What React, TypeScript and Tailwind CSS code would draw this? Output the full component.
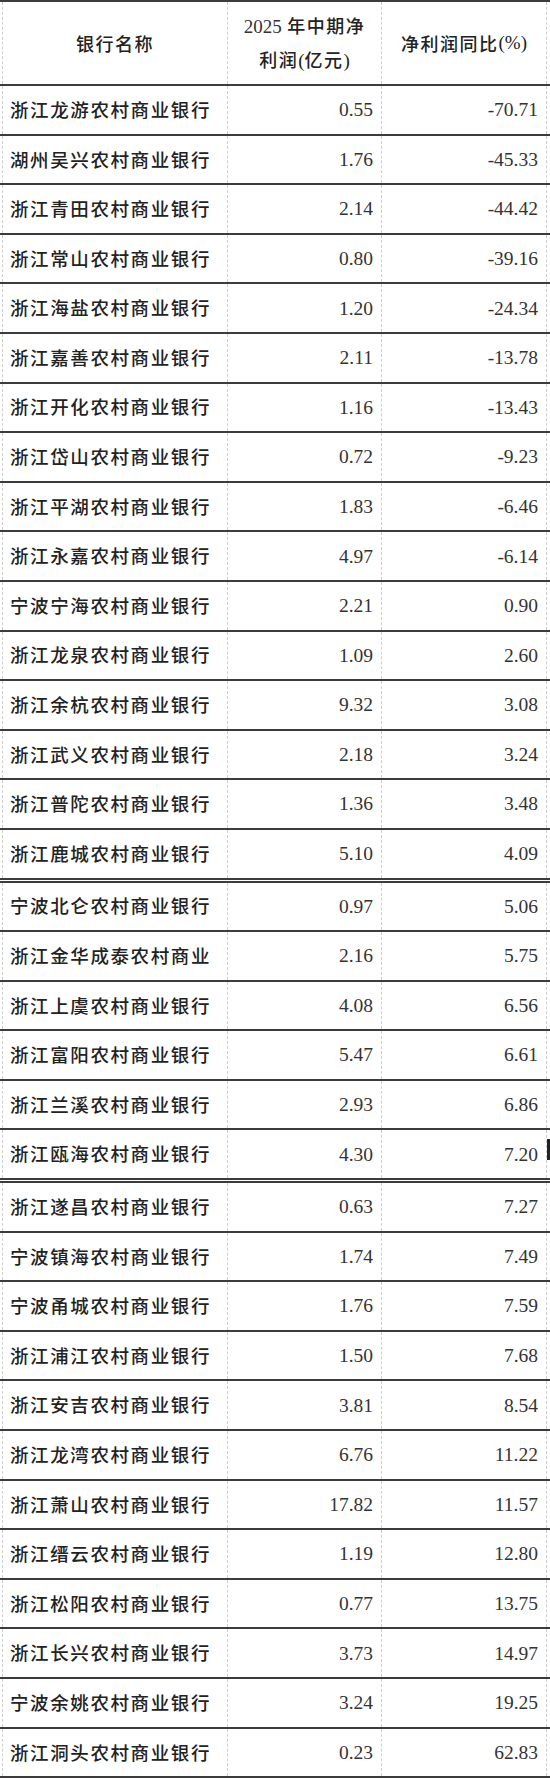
import React from 'react';

type Row = {
  name: string;
  profit: string;
  yoy: string;
};

const rows: Row[] = [
  { name: '浙江龙游农村商业银行', profit: '0.55', yoy: '-70.71' },
  { name: '湖州吴兴农村商业银行', profit: '1.76', yoy: '-45.33' },
  { name: '浙江青田农村商业银行', profit: '2.14', yoy: '-44.42' },
  { name: '浙江常山农村商业银行', profit: '0.80', yoy: '-39.16' },
  { name: '浙江海盐农村商业银行', profit: '1.20', yoy: '-24.34' },
  { name: '浙江嘉善农村商业银行', profit: '2.11', yoy: '-13.78' },
  { name: '浙江开化农村商业银行', profit: '1.16', yoy: '-13.43' },
  { name: '浙江岱山农村商业银行', profit: '0.72', yoy: '-9.23' },
  { name: '浙江平湖农村商业银行', profit: '1.83', yoy: '-6.46' },
  { name: '浙江永嘉农村商业银行', profit: '4.97', yoy: '-6.14' },
  { name: '宁波宁海农村商业银行', profit: '2.21', yoy: '0.90' },
  { name: '浙江龙泉农村商业银行', profit: '1.09', yoy: '2.60' },
  { name: '浙江余杭农村商业银行', profit: '9.32', yoy: '3.08' },
  { name: '浙江武义农村商业银行', profit: '2.18', yoy: '3.24' },
  { name: '浙江普陀农村商业银行', profit: '1.36', yoy: '3.48' },
  { name: '浙江鹿城农村商业银行', profit: '5.10', yoy: '4.09' },
  { name: '宁波北仑农村商业银行', profit: '0.97', yoy: '5.06' },
  { name: '浙江金华成泰农村商业', profit: '2.16', yoy: '5.75' },
  { name: '浙江上虞农村商业银行', profit: '4.08', yoy: '6.56' },
  { name: '浙江富阳农村商业银行', profit: '5.47', yoy: '6.61' },
  { name: '浙江兰溪农村商业银行', profit: '2.93', yoy: '6.86' },
  { name: '浙江瓯海农村商业银行', profit: '4.30', yoy: '7.20' },
  { name: '浙江遂昌农村商业银行', profit: '0.63', yoy: '7.27' },
  { name: '宁波镇海农村商业银行', profit: '1.74', yoy: '7.49' },
  { name: '宁波甬城农村商业银行', profit: '1.76', yoy: '7.59' },
  { name: '浙江浦江农村商业银行', profit: '1.50', yoy: '7.68' },
  { name: '浙江安吉农村商业银行', profit: '3.81', yoy: '8.54' },
  { name: '浙江龙湾农村商业银行', profit: '6.76', yoy: '11.22' },
  { name: '浙江萧山农村商业银行', profit: '17.82', yoy: '11.57' },
  { name: '浙江缙云农村商业银行', profit: '1.19', yoy: '12.80' },
  { name: '浙江松阳农村商业银行', profit: '0.77', yoy: '13.75' },
  { name: '浙江长兴农村商业银行', profit: '3.73', yoy: '14.97' },
  { name: '宁波余姚农村商业银行', profit: '3.24', yoy: '19.25' },
  { name: '浙江洞头农村商业银行', profit: '0.23', yoy: '62.83' },
];

// rows after which the source table has a double rule
const doubleAfter = [15, 21];

const cjk = "font-['Noto_Sans_CJK_SC',sans-serif]";
const num = "font-['Liberation_Serif','Noto_Sans_CJK_SC',serif]";

export default function App() {
  return (
    <div className="w-[550px] bg-white text-[#222]">
      {/* header */}
      <div className="h-[86px] border-t-2 border-b-2 border-[#3c3c3c]">
        <div className="ml-[2px] grid h-full w-[545px] grid-cols-[226px_154px_165px]">
          <div className={`flex items-center justify-center border-l border-r border-dashed border-[#cfcfcf] text-[18px] font-medium tracking-[1.5px] ${cjk}`}>
            银行名称
          </div>
          <div className={`flex flex-col items-center justify-center border-r border-dashed border-[#cfcfcf] text-[18px] font-medium leading-[33px] tracking-[1.5px] ${cjk}`}>
            <div>
              <span className={`${num} font-normal tracking-normal text-[19px] text-[#333]`}>2025</span> 年中期净
            </div>
            <div>
              利润<span className={`${num} font-normal tracking-normal text-[19px]`}>(</span>亿元<span className={`${num} font-normal tracking-normal text-[19px]`}>)</span>
            </div>
          </div>
          <div className={`flex items-center justify-center border-r border-dashed border-[#cfcfcf] text-[18px] font-medium tracking-[1.5px] ${cjk}`}>
            净利润同比<span className={`${num} font-normal tracking-normal text-[19px]`}>(%)</span>
          </div>
        </div>
      </div>

      {rows.map((r, i) => {
        const dbl = doubleAfter.includes(i);
        return (
          <div
            key={r.name}
            className={`relative border-[#3c3c3c] ${dbl ? 'h-[52.6px] border-b-[5px] border-double' : 'h-[49.6px] border-b-2'}`}
          >
            <div className="ml-[2px] grid h-full w-[545px] grid-cols-[226px_154px_165px]">
              <div className={`flex items-center border-l border-r border-dashed border-[#cfcfcf] pl-[7px] text-[18.5px] font-medium tracking-[1.6px] ${cjk}`}>
                {r.name}
              </div>
              <div className={`flex items-center justify-end border-r border-dashed border-[#cfcfcf] pr-[8px] text-[19.5px] text-[#333] ${num}`}>
                {r.profit}
              </div>
              <div className={`flex items-center justify-end border-r border-dashed border-[#cfcfcf] pr-[8px] text-[19.5px] text-[#333] ${num}`}>
                {r.yoy}
              </div>
            </div>
            {i === 21 && <span className="absolute right-0 top-[9px] h-[21px] w-[3px] bg-[#222]" />}
          </div>
        );
      })}
    </div>
  );
}
